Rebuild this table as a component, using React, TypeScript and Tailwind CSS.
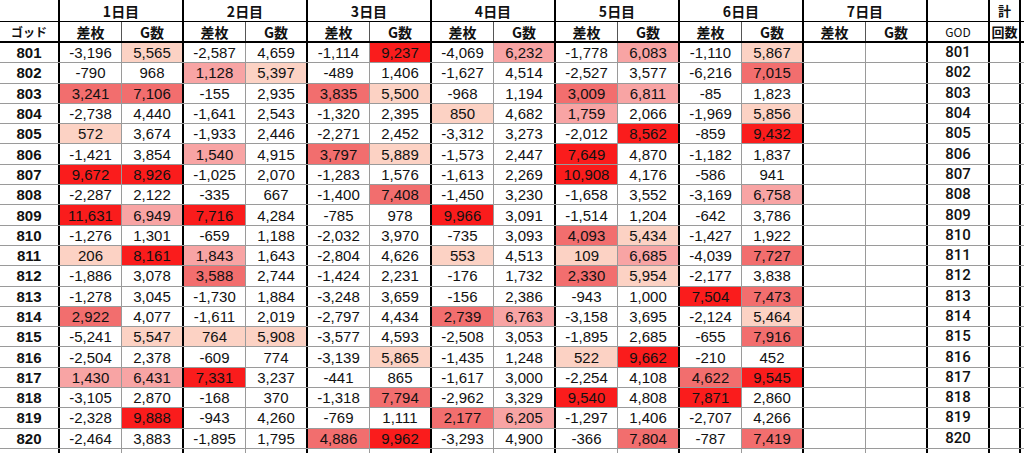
import React from "react";

type Day = [string, string];
type Row = { id: string; days: Day[] };

const raw: string[] = [
  "801|-3,196 5,565|-2,587 4,659|-1,114 9,237|-4,069 6,232|-1,778 6,083|-1,110 5,867",
  "802|-790 968|1,128 5,397|-489 1,406|-1,627 4,514|-2,527 3,577|-6,216 7,015",
  "803|3,241 7,106|-155 2,935|3,835 5,500|-968 1,194|3,009 6,811|-85 1,823",
  "804|-2,738 4,440|-1,641 2,543|-1,320 2,395|850 4,682|1,759 2,066|-1,969 5,856",
  "805|572 3,674|-1,933 2,446|-2,271 2,452|-3,312 3,273|-2,012 8,562|-859 9,432",
  "806|-1,421 3,854|1,540 4,915|3,797 5,889|-1,573 2,447|7,649 4,870|-1,182 1,837",
  "807|9,672 8,926|-1,025 2,070|-1,283 1,576|-1,613 2,269|10,908 4,176|-586 941",
  "808|-2,287 2,122|-335 667|-1,400 7,408|-1,450 3,230|-1,658 3,552|-3,169 6,758",
  "809|11,631 6,949|7,716 4,284|-785 978|9,966 3,091|-1,514 1,204|-642 3,786",
  "810|-1,276 1,301|-659 1,188|-2,032 3,970|-735 3,093|4,093 5,434|-1,427 1,922",
  "811|206 8,161|1,843 1,643|-2,804 4,626|553 4,513|109 6,685|-4,039 7,727",
  "812|-1,886 3,078|3,588 2,744|-1,424 2,231|-176 1,732|2,330 5,954|-2,177 3,838",
  "813|-1,278 3,045|-1,730 1,884|-3,248 3,659|-156 2,386|-943 1,000|7,504 7,473",
  "814|2,922 4,077|-1,611 2,019|-2,797 4,434|2,739 6,763|-3,158 3,695|-2,124 5,464",
  "815|-5,241 5,547|764 5,908|-3,577 4,593|-2,508 3,053|-1,895 2,685|-655 7,916",
  "816|-2,504 2,378|-609 774|-3,139 5,865|-1,435 1,248|522 9,662|-210 452",
  "817|1,430 6,431|7,331 3,237|-441 865|-1,617 3,000|-2,254 4,108|4,622 9,545",
  "818|-3,105 2,870|-168 370|-1,318 7,794|-2,962 3,329|9,540 4,808|7,871 2,860",
  "819|-2,328 9,888|-943 4,260|-769 1,111|2,177 6,205|-1,297 1,406|-2,707 4,266",
  "820|-2,464 3,883|-1,895 1,795|4,886 9,962|-3,293 4,900|-366 7,804|-787 7,419",
];

const rows: Row[] = raw.map((line) => {
  const [id, ...rest] = line.split("|");
  return { id, days: rest.map((d) => d.split(" ") as Day) };
});

const num = (s: string) => parseInt(s.replace(/,/g, ""), 10);

const PEACH = "bg-[#fcd2c4]";
const PINK = "bg-[#f8a4a4]";
const MED = "bg-[#f26e6e]";
const RED = "bg-[#fa1c1c]";

function sColor(s: string): string {
  const v = num(s);
  if (v < 0) return "bg-white";
  if (v < 1000) return PEACH;
  if (v < 2000) return PINK;
  if (v < 5000) return MED;
  return RED;
}

function gColor(s: string): string {
  const v = num(s);
  if (v < 5000) return "bg-white";
  if (v < 6000) return PEACH;
  if (v < 7000) return PINK;
  if (v < 8000) return MED;
  return RED;
}

const NUM = "font-['Liberation_Sans',Arial,sans-serif]";
const JP = "font-['Noto_Sans_CJK_JP','Liberation_Sans',sans-serif]";

const dayNums = [1, 2, 3, 4, 5, 6, 7];

export default function App() {
  return (
    <div className="w-[1024px] h-[453px] overflow-hidden bg-white text-[#111]">
      {/* header row 1 */}
      <div className="flex h-[22px] border-b border-black">
        <div className="w-[60px] border-r-2 border-black" />
        {dayNums.map((d) => (
          <div
            key={d}
            className={`w-[124px] border-r-2 border-black flex items-center justify-center font-bold text-[14px] leading-none ${JP}`}
          >
            {d}日目
          </div>
        ))}
        <div className="w-[62px] border-r-2 border-black" />
        <div
          className={`w-[31px] border-r-2 border-black flex items-center justify-center font-bold text-[13px] leading-none ${JP}`}
        >
          計
        </div>
      </div>
      {/* header row 2 */}
      <div className="flex h-[21px] border-b-2 border-black">
        <div
          className={`w-[60px] border-r-2 border-black flex items-center justify-center font-bold text-[12px] leading-none ${JP}`}
        >
          ゴッド
        </div>
        {dayNums.map((d) => (
          <React.Fragment key={d}>
            <div
              className={`w-[62px] border-r border-[#555] flex items-center justify-center font-bold text-[14px] leading-none ${JP}`}
            >
              差枚
            </div>
            <div
              className={`w-[62px] border-r-2 border-black flex items-center justify-center font-bold text-[14px] leading-none ${JP}`}
            >
              G数
            </div>
          </React.Fragment>
        ))}
        <div
          className={`w-[62px] border-r-2 border-black flex items-center justify-center text-[12px] leading-none ${JP}`}
        >
          GOD
        </div>
        <div
          className={`w-[31px] border-r-2 border-black flex items-center justify-center font-bold text-[13px] leading-none ${JP}`}
        >
          回数
        </div>
      </div>
      {/* data rows */}
      {rows.map((r) => (
        <div key={r.id} className={`flex h-[20.3px] border-b border-[#9a9a9a] text-[15px] leading-none ${NUM}`}>
          <div className="w-[60px] border-r-2 border-black flex items-center justify-center font-bold">
            {r.id}
          </div>
          {dayNums.map((d, i) => {
            const day = r.days[i];
            return (
              <React.Fragment key={d}>
                <div
                  className={`w-[62px] border-r border-[#9a9a9a] flex items-center justify-center ${
                    day ? sColor(day[0]) : "bg-white"
                  }`}
                >
                  {day ? day[0] : ""}
                </div>
                <div
                  className={`w-[62px] border-r-2 border-black flex items-center justify-center ${
                    day ? gColor(day[1]) : "bg-white"
                  }`}
                >
                  {day ? day[1] : ""}
                </div>
              </React.Fragment>
            );
          })}
          <div className="w-[62px] border-r-2 border-black flex items-center justify-center font-['Roboto',sans-serif] font-medium">
            {r.id}
          </div>
          <div className="w-[31px] border-r-2 border-black" />
        </div>
      ))}
      {/* trailing partial row */}
      <div className="flex h-[20px]">
        <div className="w-[60px] border-r-2 border-black" />
        {dayNums.map((d) => (
          <React.Fragment key={d}>
            <div className="w-[62px] border-r border-[#9a9a9a]" />
            <div className="w-[62px] border-r-2 border-black" />
          </React.Fragment>
        ))}
        <div className="w-[62px] border-r-2 border-black" />
        <div className="w-[31px] border-r-2 border-black" />
      </div>
    </div>
  );
}
